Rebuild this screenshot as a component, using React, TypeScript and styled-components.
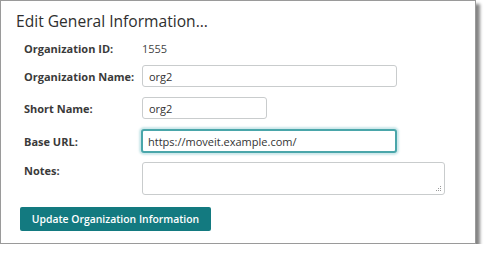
import styled, { createGlobalStyle } from 'styled-components'

const GlobalStyle = createGlobalStyle`
  html, body {
    margin: 0;
    padding: 0;
    background: #ffffff;
  }
  body {
    font-family: "Open Sans", "Liberation Sans", sans-serif;
  }
`;

// --- Styled Components ---

const Panel = styled.section`
  box-sizing: border-box;
  width: 476px;
  height: 244px;
  background: #ffffff;
  border: 1px solid #9a9a9a;
  box-shadow: 4px 4px 3px rgba(0, 0, 0, 0.48);
  padding: 9px 0 0 15px;
`;

const Title = styled.h2`
  margin: 0;
  font-size: 15.6px;
  line-height: 22px;
  font-weight: 400;
  color: #2e2e2e;
`;

const Form = styled.form`
  display: flex;
  flex-direction: column;
  padding: 5px 0 0 8px;
`;

const Row = styled.div<{ $height: number; $gap: number; $top?: boolean }>`
  display: grid;
  grid-template-columns: 118px auto;
  align-items: ${p => (p.$top ? 'start' : 'center')};
  height: ${p => p.$height}px;
  margin-bottom: ${p => p.$gap}px;
`;

const Label = styled.label<{ $top?: boolean }>`
  font-size: 11px;
  font-weight: 700;
  color: #3a3a3a;
  white-space: nowrap;
  padding-top: ${p => (p.$top ? '1px' : '0')};
`;

const Value = styled.span`
  font-size: 11px;
  color: #444444;
`;

const TextInput = styled.input<{ $width: number; $focused?: boolean }>`
  box-sizing: border-box;
  width: ${p => p.$width}px;
  height: ${p => (p.$focused ? 24 : 22)}px;
  margin-left: ${p => (p.$focused ? '-1px' : '0')};
  padding: 0 ${p => (p.$focused ? 5 : 6)}px;
  font-family: inherit;
  font-size: 11px;
  color: #333333;
  background: #ffffff;
  border: ${p => (p.$focused ? '2px solid #4aa6aa' : '1px solid #c9cccd')};
  border-radius: 3px;
  box-shadow: ${p => (p.$focused ? '0 0 2px 2px rgba(110, 190, 195, 0.35)' : 'none')};
  outline: none;
`;

const NotesBox = styled.div`
  position: relative;
  width: 303px;
  height: 33px;
`;

const Notes = styled.textarea`
  box-sizing: border-box;
  display: block;
  width: 100%;
  height: 100%;
  padding: 4px 6px;
  font-family: inherit;
  font-size: 11px;
  border: 1px solid #c9cccd;
  border-radius: 3px;
  resize: none;
  outline: none;
`;

const Grip = styled.svg`
  position: absolute;
  right: 3px;
  bottom: 3px;
  width: 7px;
  height: 6px;
`;

const SubmitButton = styled.button`
  align-self: flex-start;
  margin-left: -4px;
  height: 24px;
  width: 191px;
  padding: 0;
  border: none;
  border-radius: 2px;
  background: #137a80;
  color: #ffffff;
  font-family: inherit;
  font-size: 10.4px;
  font-weight: 600;
  white-space: nowrap;
  cursor: pointer;
`;

function App() {
  return (
    <>
      <GlobalStyle />
      <Panel>
        <Title>Edit General Information...</Title>
        <Form onSubmit={e => e.preventDefault()}>
          <Row $height={22} $gap={6}>
            <Label>Organization ID:</Label>
            <Value>1555</Value>
          </Row>
          <Row $height={22} $gap={10}>
            <Label>Organization Name:</Label>
            <TextInput $width={255} defaultValue="org2" />
          </Row>
          <Row $height={22} $gap={10}>
            <Label>Short Name:</Label>
            <TextInput $width={125} defaultValue="org2" />
          </Row>
          <Row $height={24} $gap={9}>
            <Label>Base URL:</Label>
            <TextInput $width={256} $focused defaultValue="https://moveit.example.com/" />
          </Row>
          <Row $height={33} $gap={12} $top>
            <Label $top>Notes:</Label>
            <NotesBox>
              <Notes />
              <Grip viewBox="0 0 7 6" aria-hidden="true">
                <g fill="#9a9a9a">
                  <rect x="5" y="0" width="1" height="1" />
                  <rect x="3" y="2" width="1" height="1" />
                  <rect x="5" y="2" width="1" height="1" />
                  <rect x="1" y="4" width="1" height="1" />
                  <rect x="3" y="4" width="1" height="1" />
                  <rect x="5" y="4" width="1" height="1" />
                </g>
              </Grip>
            </NotesBox>
          </Row>
          <SubmitButton type="submit">Update Organization Information</SubmitButton>
        </Form>
      </Panel>
    </>
  )
}

export default App
